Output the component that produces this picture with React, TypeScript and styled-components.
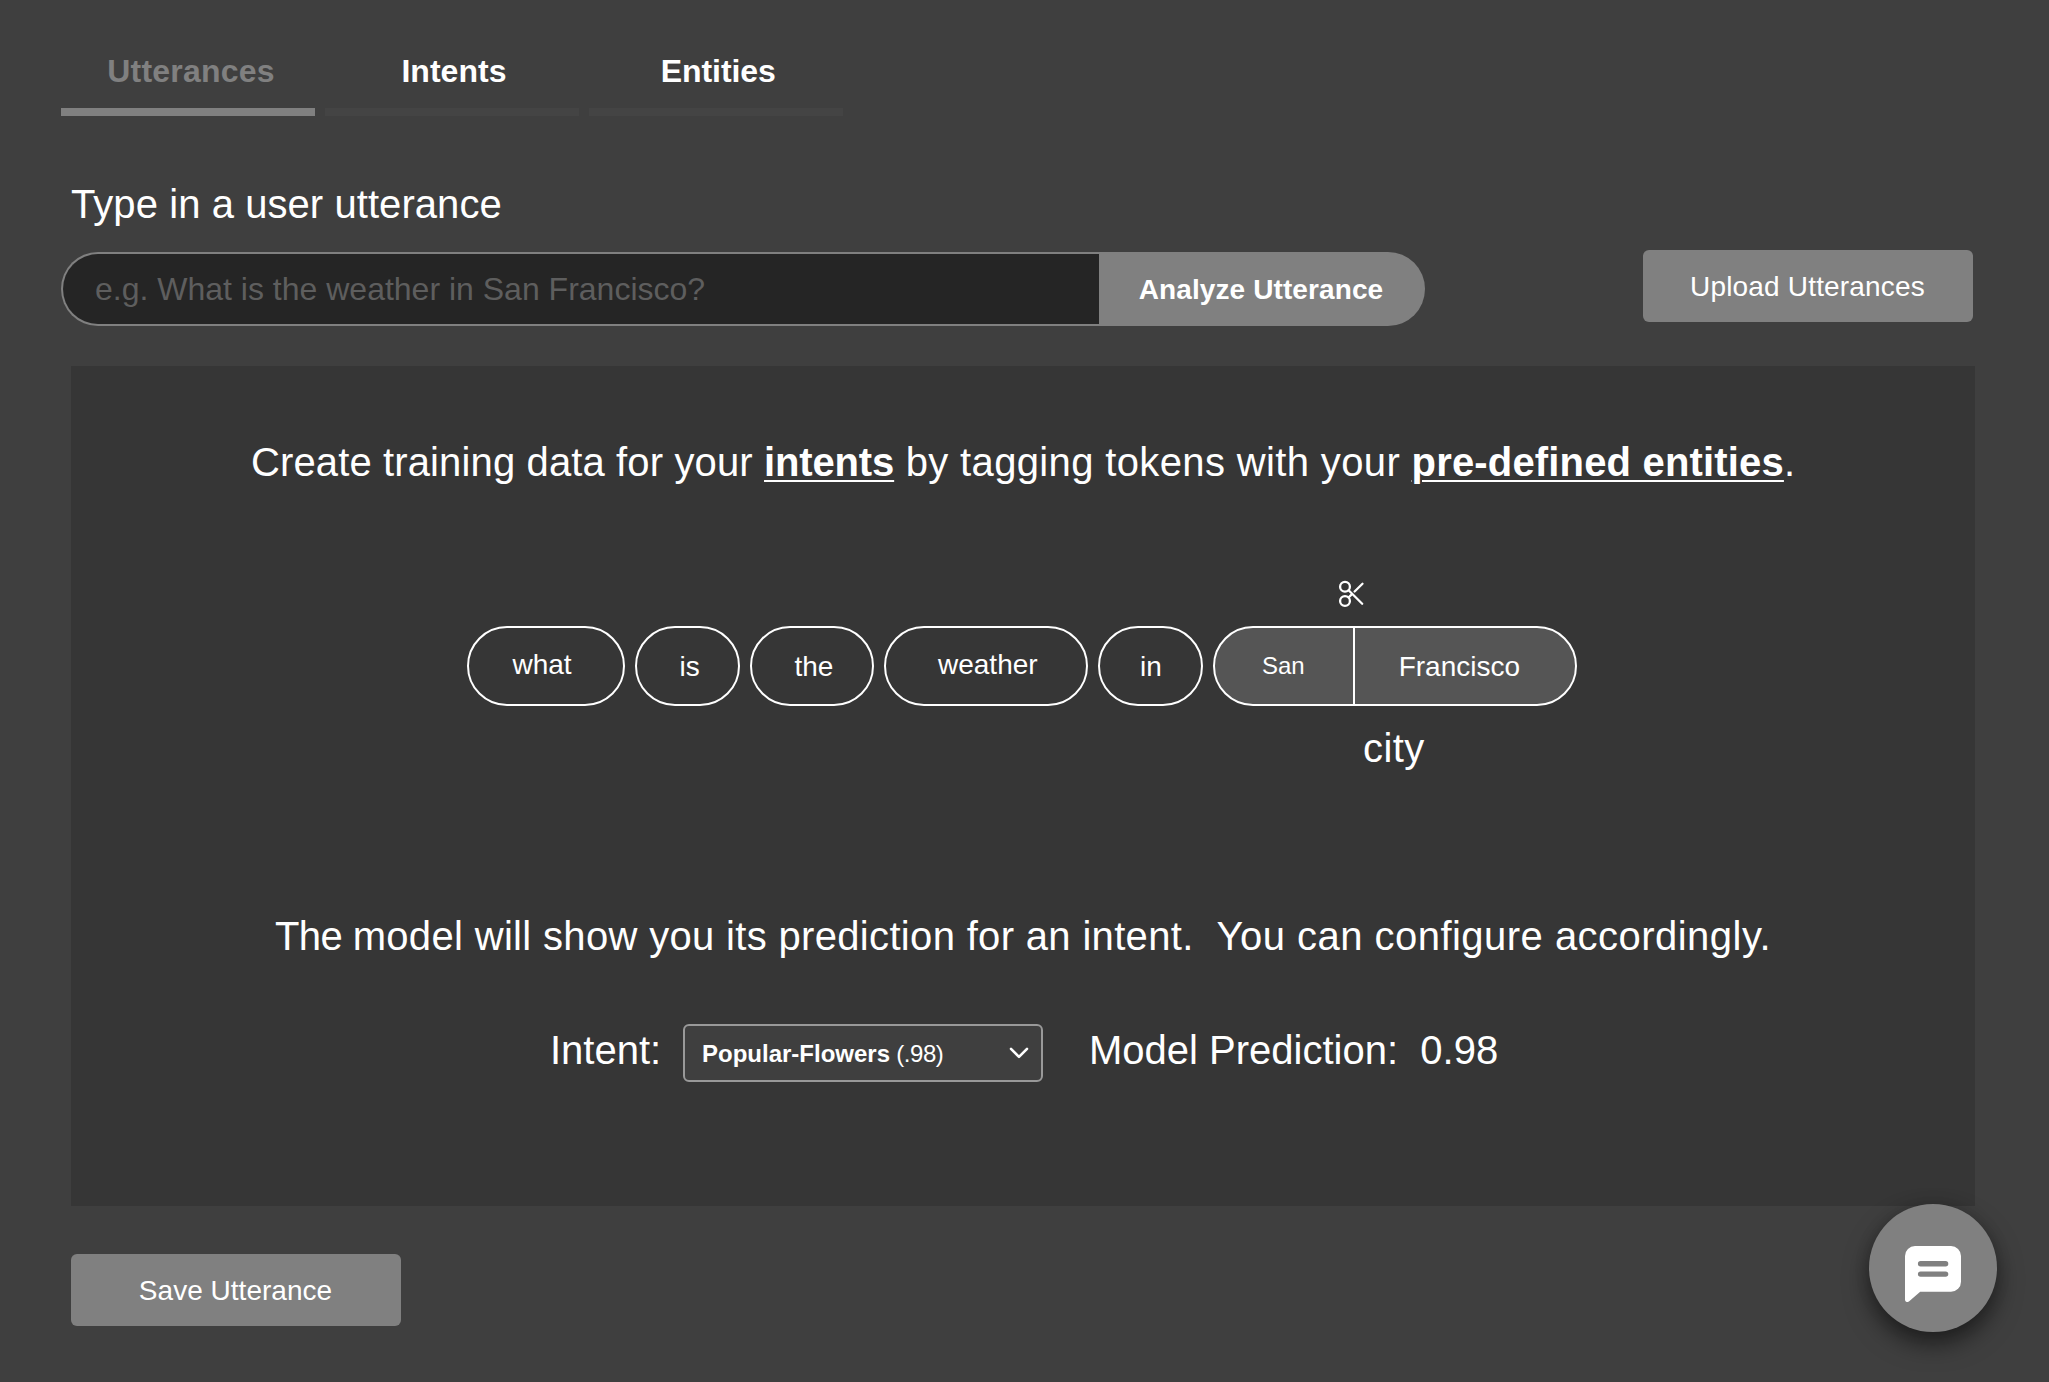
import React from 'react';
import styled, { createGlobalStyle } from 'styled-components';

const GlobalStyle = createGlobalStyle`
  *, *::before, *::after { box-sizing: border-box; }
  body {
    margin: 0;
    background: #3f3f3f;
    color: #fff;
    font-family: "Liberation Sans", Arial, Helvetica, sans-serif;
    -webkit-font-smoothing: antialiased;
  }
  button, input { font-family: inherit; }
`;

const Page = styled.div`
  position: relative;
  min-height: 1382px;
  padding: 51px 74px 0 61px;
  overflow: hidden;
`;

const Tabs = styled.nav`
  display: flex;
  gap: 10px;
`;

const Tab = styled.a<{ $active?: boolean; $shift: number; $tracking: number }>`
  width: 254px;
  padding: 0 0 17px ${p => p.$shift}px;
  border-bottom: 8px solid ${p => (p.$active ? '#808080' : '#444444')};
  color: ${p => (p.$active ? '#808080' : '#fff')};
  font-size: 32px;
  font-weight: 700;
  line-height: 40px;
  letter-spacing: ${p => p.$tracking}px;
  text-align: center;
`;

const FieldLabel = styled.label`
  display: block;
  margin: 64px 0 22px 10px;
  font-size: 40px;
  line-height: 48px;
  letter-spacing: 0.07px;
`;

const Toolbar = styled.div`
  display: flex;
  justify-content: space-between;
  align-items: flex-start;
  padding-right: 2px;
`;

const SearchGroup = styled.div`
  display: flex;
  height: 74px;
  margin-top: 2px;
`;

const UtteranceInput = styled.input`
  width: 1038px;
  height: 74px;
  padding: 0 0 0 32px;
  border: 2px solid #808080;
  border-right: 0;
  border-radius: 37px 0 0 37px;
  background: #252525;
  color: #fff;
  font-size: 32px;
  outline: none;
  &::placeholder { color: #5e5e5e; opacity: 1; }
`;

const AnalyzeButton = styled.button`
  width: 326px;
  padding: 1px 2px 0 0;
  border: 0;
  border-radius: 0 37px 37px 0;
  background: #808080;
  color: #fff;
  font-size: 28px;
  font-weight: 700;
  letter-spacing: 0.1px;
`;

const ActionButton = styled.button<{ $tracking: number }>`
  width: 330px;
  height: 72px;
  padding: 1px 1px 0 0;
  border: 0;
  border-radius: 6px;
  background: #808080;
  color: #fff;
  font-size: 28px;
  letter-spacing: ${p => p.$tracking}px;
`;

const Panel = styled.section`
  width: 1904px;
  height: 840px;
  margin: 40px 0 48px 10px;
  padding-top: 72px;
  background: #363636;
`;

const Lead = styled.p`
  margin: 0;
  font-size: 40px;
  line-height: 48px;
  text-align: center;
  white-space: pre;
`;

const Run = styled.span<{ $tracking: number }>`
  letter-spacing: ${p => p.$tracking}px;
`;

const TextLink = styled.a<{ $tracking: number }>`
  font-weight: 700;
  letter-spacing: ${p => p.$tracking}px;
  text-decoration: underline;
  text-decoration-thickness: 2px;
  text-underline-offset: 4px;
`;

const TokenRow = styled.div`
  display: flex;
  align-items: flex-start;
  gap: 10px;
  margin: 94px 0 140px 396px;
`;

const Token = styled.div<{ $width: number; $inset: number; $top: number }>`
  width: ${p => p.$width}px;
  height: 80px;
  margin-top: 46px;
  padding: ${p => p.$top}px 0 0 ${p => p.$inset}px;
  border: 2px solid #fff;
  border-radius: 40px;
  font-size: 28px;
  line-height: 31px;
`;

const Entity = styled.div`
  display: flex;
  flex-direction: column;
  width: 364px;
`;

const SplitHandle = styled.div`
  height: 46px;
  padding-left: 125px;
  svg { display: block; }
`;

const EntityPill = styled.div`
  display: flex;
  height: 80px;
  border: 2px solid #fff;
  border-radius: 40px;
  background: #555555;
`;

const EntityPart = styled.div<{ $size: number; $inset: number; $top: number; $width?: number }>`
  width: ${p => (p.$width ? `${p.$width}px` : 'auto')};
  padding: ${p => p.$top}px 0 0 ${p => p.$inset}px;
  font-size: ${p => p.$size}px;
  line-height: ${p => (p.$size === 24 ? 27 : 31)}px;
  & + & { border-left: 2px solid #fff; }
`;

const EntityName = styled.div`
  margin: 18px 0 0 150px;
  font-size: 40px;
  line-height: 48px;
  letter-spacing: 0.4px;
`;

const PredictionRow = styled.div`
  display: flex;
  align-items: flex-start;
  margin: 64px 0 0 479px;
`;

const PredictionText = styled.div<{ $width?: number }>`
  width: ${p => (p.$width ? `${p.$width}px` : 'auto')};
  margin-top: 2px;
  font-size: 40px;
  line-height: 48px;
  white-space: pre;
`;

const Select = styled.div`
  display: flex;
  align-items: center;
  justify-content: space-between;
  width: 360px;
  height: 58px;
  margin-right: 46px;
  padding: 0 12px 0 17px;
  border: 2px solid #999999;
  border-radius: 6px;
  background: #3f3f3f;
  font-size: 24px;
  line-height: 27px;
`;

const SelectScore = styled.span`
  letter-spacing: -0.45px;
`;

const SaveRow = styled.footer`
  padding-left: 10px;
`;

const ChatButton = styled.button`
  position: absolute;
  right: 52px;
  top: 1204px;
  display: flex;
  align-items: center;
  justify-content: center;
  width: 128px;
  height: 128px;
  padding: 12px 0 0;
  border: 0;
  border-radius: 50%;
  background: #808080;
  box-shadow: 0 12px 24px rgba(0, 0, 0, 0.5), 0 0 16px rgba(0, 0, 0, 0.12);
  svg { display: block; }
`;

const ScissorsIcon = () => (
  <svg width="27" height="28" viewBox="0 0 27 28" fill="none" stroke="#fff" strokeWidth="2.3">
    <circle cx="7" cy="6.7" r="4.9" />
    <circle cx="7" cy="21" r="4.9" />
    <path d="M10.6 10.3 24.2 23.7M10.6 17.5 14 14.1M16.6 11.5 24.5 3.8" strokeLinecap="round" />
  </svg>
);

const ChevronIcon = () => (
  <svg width="20" height="14" viewBox="0 0 20 14" fill="none" stroke="#fff" strokeWidth="2.6">
    <path d="M2 2.8 10 10.8 18 2.8" strokeLinecap="round" strokeLinejoin="round" />
  </svg>
);

const ChatIcon = () => (
  <svg width="56" height="56" viewBox="0 0 56 56">
    <path
      d="M10 0H46A10 10 0 0 1 56 10V35.7A10 10 0 0 1 46 45.7H15.2L4.2 55.2C2.4 56.8 0 56 0 53.5V10A10 10 0 0 1 10 0Z"
      fill="#fff"
    />
    <path d="M15.6 17.8H40.6M15.6 28.1H40.6" stroke="#808080" strokeWidth="5.4" strokeLinecap="round" />
  </svg>
);

export default function App() {
  return (
    <>
      <GlobalStyle />
      <Page>
        <Tabs>
          <Tab $active $shift={6} $tracking={0.2}>Utterances</Tab>
          <Tab $shift={4} $tracking={0.05}>Intents</Tab>
          <Tab $shift={4.5} $tracking={-0.1}>Entities</Tab>
        </Tabs>

        <FieldLabel htmlFor="utterance">Type in a user utterance</FieldLabel>
        <Toolbar>
          <SearchGroup>
            <UtteranceInput id="utterance" placeholder="e.g. What is the weather in San Francisco?" />
            <AnalyzeButton>Analyze Utterance</AnalyzeButton>
          </SearchGroup>
          <ActionButton $tracking={0.18}>Upload Utterances</ActionButton>
        </Toolbar>

        <Panel>
          <Lead>
            <Run $tracking={0.13}>Create training data for your </Run>
            <TextLink $tracking={-0.14}>intents</TextLink>
            <Run $tracking={0.36}> by tagging tokens with your </Run>
            <TextLink $tracking={0.17}>pre-defined entities</TextLink>.
          </Lead>

          <TokenRow>
            <Token $width={158} $inset={43.5} $top={21}>what</Token>
            <Token $width={105} $inset={42.5} $top={23}>is</Token>
            <Token $width={124} $inset={42.5} $top={23}>the</Token>
            <Token $width={204} $inset={52} $top={21}>weather</Token>
            <Token $width={105} $inset={40} $top={23}>in</Token>
            <Entity>
              <SplitHandle><ScissorsIcon /></SplitHandle>
              <EntityPill>
                <EntityPart $size={24} $inset={47} $top={24} $width={138}>San</EntityPart>
                <EntityPart $size={28} $inset={43.7} $top={23}>Francisco</EntityPart>
              </EntityPill>
              <EntityName>city</EntityName>
            </Entity>
          </TokenRow>

          <Lead>
            <Run $tracking={-0.6}>The </Run>
            <Run $tracking={0.33}>{'model will show you its prediction for an intent.  '}</Run>
            <Run $tracking={0.47}>You can configure accordingly.</Run>
          </Lead>

          <PredictionRow>
            <PredictionText $width={133}>Intent:</PredictionText>
            <Select>
              <span>
                <strong>Popular-Flowers</strong>
                <SelectScore> (.98)</SelectScore>
              </span>
              <ChevronIcon />
            </Select>
            <PredictionText>{'Model Prediction:  0.98'}</PredictionText>
          </PredictionRow>
        </Panel>

        <SaveRow>
          <ActionButton $tracking={0.02}>Save Utterance</ActionButton>
        </SaveRow>

        <ChatButton aria-label="Open chat">
          <ChatIcon />
        </ChatButton>
      </Page>
    </>
  );
}
